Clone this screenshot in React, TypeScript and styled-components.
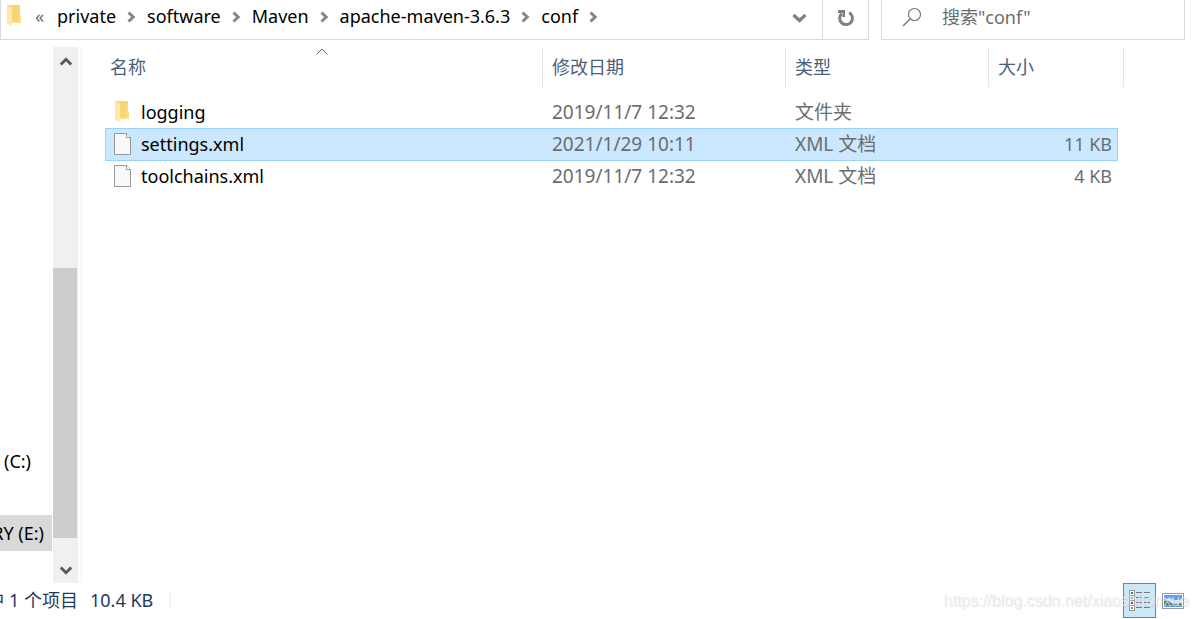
import React from 'react';
import styled, { createGlobalStyle } from 'styled-components';

const GlobalStyle = createGlobalStyle`
  *, *::before, *::after { box-sizing: border-box; }
  body {
    margin: 0;
    background: #fff;
    color: #000;
    font-family: "Noto Sans", "Noto Sans CJK SC", sans-serif;
    font-size: 18px;
    line-height: 24px;
  }
  button {
    font: inherit;
    color: inherit;
    background: none;
    border: 0;
    padding: 0;
    display: flex;
    align-items: center;
    justify-content: center;
  }
`;

const Window = styled.div`
  position: relative;
  display: flex;
  flex-direction: column;
  min-height: 100vh;
  overflow: hidden;
`;

const Toolbar = styled.header`
  display: flex;
  gap: 12px;
  height: 40px;
  padding-right: 13px;
`;

const AddressBar = styled.nav`
  display: flex;
  flex: 1;
  min-width: 0;
  border: 1px solid #d9d9d9;
  border-top: 0;
`;

const Crumbs = styled.ol`
  display: flex;
  flex: 1;
  align-items: center;
  min-width: 0;
  margin: 0;
  padding: 0 0 7px 6px;
  list-style: none;
  white-space: nowrap;
`;

const Crumb = styled.li`
  display: flex;
  align-items: center;
`;

const Overflow = styled.button`
  width: 35px;
  color: #6d6d6d;
`;

const CrumbArrow = styled.svg`
  width: 9px;
  height: 12px;
  margin: 2px 11px 0;
`;

const BarButton = styled.button<{ $divided?: boolean }>`
  width: 46px;
  padding-bottom: 4px;
  border-left: ${(p) => (p.$divided ? '1px solid #d9d9d9' : '0')};
`;

const SearchBox = styled.label`
  display: flex;
  align-items: center;
  gap: 20px;
  width: 304px;
  padding: 0 20px 6px;
  border: 1px solid #d9d9d9;
  border-top: 0;
`;

const SearchInput = styled.input`
  flex: 1;
  min-width: 0;
  padding: 0;
  border: 0;
  outline: 0;
  background: none;
  font: inherit;
  &::placeholder { color: #6d6d6d; opacity: 1; }
`;

const Body = styled.div`
  display: flex;
  flex: 1;
  padding-top: 7px;
`;

const Sidebar = styled.aside`
  display: flex;
  flex-direction: column;
  justify-content: flex-end;
  width: 53px;
  padding: 0 1px 32px 0;
`;

const Drive = styled.button<{ $selected?: boolean }>`
  justify-content: flex-end;
  height: 36px;
  margin-top: 36px;
  padding-right: ${(p) => (p.$selected ? '8px' : '21px')};
  overflow: hidden;
  white-space: nowrap;
  background: ${(p) => (p.$selected ? '#d9d9d9' : 'transparent')};
`;

const Scrollbar = styled.div`
  display: flex;
  flex-direction: column;
  width: 25px;
  background: #f0f0f0;
`;

const ScrollButton = styled.button`
  height: 28px;
`;

const ScrollGap = styled.div<{ $grow: number }>`
  flex: ${(p) => p.$grow};
`;

const Thumb = styled.div`
  flex: 270;
  margin-right: 1px;
  background: #cdcdcd;
`;

const Splitter = styled.div`
  width: 2px;
  margin-left: 2px;
  background: #f7f7f7;
`;

const Pane = styled.main`
  flex: 1;
  min-width: 0;
  padding: 0 74px 0 23px;
`;

const FileTable = styled.table`
  display: block;
`;

const Head = styled.thead`
  display: block;
  margin-bottom: 9px;
`;

const Rows = styled.tbody`
  display: block;
  padding-right: 6px;
`;

const HeadRow = styled.tr`
  display: grid;
  grid-template-columns: minmax(0, 1fr) 243px 203px 135px;
`;

const HeadCell = styled.th`
  position: relative;
  height: 40px;
  padding: 8px 9px 8px 5px;
  border-right: 1px solid #e5e5e5;
  color: #4c607a;
  font-weight: 400;
  text-align: left;
  & + & { padding-left: 9px; }
`;

const SortMark = styled.svg`
  position: absolute;
  top: 1px;
  left: calc(50% - 8px);
  width: 12px;
  height: 7px;
`;

const FileRow = styled.tr<{ $selected?: boolean }>`
  display: grid;
  grid-template-columns: minmax(0, 1fr) 243px 203px 129px;
  height: 33px;
  margin-bottom: -1px;
  border: 1px solid ${(p) => (p.$selected ? '#99d1ff' : 'transparent')};
  background: ${(p) => (p.$selected ? '#cce8ff' : 'transparent')};
`;

const Cell = styled.td`
  padding: 3px 5px 3px 10px;
  color: #6d6d6d;
  font-size: 19px;
  white-space: nowrap;
`;

const SizeCell = styled(Cell)`
  font-size: 18px;
  text-align: right;
`;

const NameCell = styled(Cell)`
  display: flex;
  align-items: center;
  padding: 3px 8px 4px;
  color: #000;
  font-size: 18px;
`;

const IconSlot = styled.span`
  display: flex;
  justify-content: center;
  width: 17px;
  margin-right: 10px;
`;

const StatusBar = styled.footer`
  display: flex;
  align-items: center;
  height: 36px;
  padding: 0 14px 1px 0;
  color: #1e395b;
`;

const Selection = styled.span`
  display: flex;
  justify-content: flex-end;
  width: 78px;
  margin-bottom: 2px;
  overflow: hidden;
  white-space: nowrap;
`;

const Size = styled.span`
  margin: 0 0 2px 12px;
  padding-right: 16px;
  border-right: 2px solid #f3f3f3;
  line-height: 18px;
`;

const Views = styled.div`
  display: flex;
  gap: 6px;
  margin-left: auto;
`;

const ViewButton = styled.button<{ $active?: boolean }>`
  width: ${(p) => (p.$active ? '33px' : '22px')};
  height: 35px;
  border: ${(p) => (p.$active ? '1px solid #2a9bd8' : '0')};
  background: ${(p) => (p.$active ? '#cce8f6' : 'transparent')};
`;

const Watermark = styled.div`
  position: absolute;
  right: 9px;
  bottom: 6px;
  color: rgba(238, 238, 238, 0.7);
  font-family: "Liberation Sans", sans-serif;
  font-size: 16px;
  text-shadow: 1px 1px 1px rgba(0, 0, 0, 0.1);
  pointer-events: none;
`;

const FolderIcon = () => (
  <svg width="15" height="22" viewBox="0 0 15 22" aria-hidden="true">
    <path d="M0 0H13V10L14 11V18H0Z" fill="#fadc80" />
    <path d="M5 0H12V17H5Z" fill="#f8d676" />
    <path d="M12 11H14V18H5V16H12Z" fill="#fbdf88" />
    <path d="M0 1L5 3V19L4 21L0 18Z" fill="#ffe9a6" />
  </svg>
);

const FileIcon = () => (
  <svg width="17" height="22" viewBox="0 0 17 22" aria-hidden="true">
    <path d="M.5 .5H12.5L16.5 4.5V21.5H.5Z" fill="#f8f9fa" stroke="#979797" />
    <path d="M12.5 .5V4.5H16.5" fill="#fff" stroke="#979797" />
  </svg>
);

const ScrollArrow = ({ down }: { down?: boolean }) => (
  <svg width="12" height="12" viewBox="0 0 12 12" aria-hidden="true">
    <path d={down ? 'M.8 4.5L6 9.7L11.2 4.5' : 'M.8 9.5L6 4.3L11.2 9.5'} fill="none" stroke="#5a5a5a" strokeWidth="3" />
  </svg>
);

const crumbs = ['private', 'software', 'Maven', 'apache-maven-3.6.3', 'conf'];

const files = [
  { name: 'logging', date: '2019/11/7 12:32', type: '文件夹', size: '', folder: true },
  { name: 'settings.xml', date: '2021/1/29 10:11', type: 'XML 文档', size: '11 KB', selected: true },
  { name: 'toolchains.xml', date: '2019/11/7 12:32', type: 'XML 文档', size: '4 KB' },
];

const detailRows = ['#2a7a9a', '#7a8a9a', '#c03030', '#6ab04a'];

export default function App() {
  return (
    <Window>
      <GlobalStyle />
      <Toolbar>
        <AddressBar>
          <Crumbs>
            <Crumb>
              <FolderIcon />
              <Overflow>«</Overflow>
            </Crumb>
            {crumbs.map((name) => (
              <Crumb key={name}>
                <button>{name}</button>
                <CrumbArrow viewBox="0 0 9 12" aria-hidden="true">
                  <path d="M1.5 1.5L6.2 6L1.5 10.5" fill="none" stroke="#858585" strokeWidth="3" />
                </CrumbArrow>
              </Crumb>
            ))}
          </Crumbs>
          <BarButton aria-label="history">
            <svg width="14" height="10" viewBox="0 0 14 10" aria-hidden="true">
              <path d="M1.5 2L7.5 7.5L13.5 2" fill="none" stroke="#808080" strokeWidth="3.2" />
            </svg>
          </BarButton>
          <BarButton $divided aria-label="refresh">
            <svg width="18" height="18" viewBox="0 0 18 18" aria-hidden="true">
              <path d="M12.2 3.6A6.4 6.4 0 1 1 4.6 4.6" fill="none" stroke="#808080" strokeWidth="3" />
              <path d="M1 1H8V8H5.5V4H1Z" fill="#808080" />
            </svg>
          </BarButton>
        </AddressBar>
        <SearchBox>
          <svg width="20" height="20" viewBox="0 0 20 20" aria-hidden="true">
            <circle cx="12.5" cy="7.5" r="6" fill="none" stroke="#777" strokeWidth="1.2" />
            <path d="M8.3 11.7L1 19" stroke="#777" strokeWidth="1.4" />
          </svg>
          <SearchInput type="text" placeholder={'搜索"conf"'} aria-label="search" />
        </SearchBox>
      </Toolbar>

      <Body>
        <Sidebar>
          <Drive>(C:)</Drive>
          <Drive $selected>RY (E:)</Drive>
        </Sidebar>
        <Scrollbar>
          <ScrollButton aria-label="up"><ScrollArrow /></ScrollButton>
          <ScrollGap $grow={193} />
          <Thumb />
          <ScrollGap $grow={17} />
          <ScrollButton aria-label="down"><ScrollArrow down /></ScrollButton>
        </Scrollbar>
        <Splitter />
        <Pane>
          <FileTable>
            <Head>
              <HeadRow>
                <HeadCell>
                  名称
                  <SortMark viewBox="0 0 12 7" aria-hidden="true">
                    <path d="M.5 6.5L6 1L11.5 6.5" fill="none" stroke="#666" />
                  </SortMark>
                </HeadCell>
                <HeadCell>修改日期</HeadCell>
                <HeadCell>类型</HeadCell>
                <HeadCell>大小</HeadCell>
              </HeadRow>
            </Head>
            <Rows>
              {files.map((f) => (
                <FileRow key={f.name} $selected={f.selected}>
                  <NameCell>
                    <IconSlot>{f.folder ? <FolderIcon /> : <FileIcon />}</IconSlot>
                    {f.name}
                  </NameCell>
                  <Cell>{f.date}</Cell>
                  <Cell>{f.type}</Cell>
                  <SizeCell>{f.size}</SizeCell>
                </FileRow>
              ))}
            </Rows>
          </FileTable>
        </Pane>
      </Body>

      <StatusBar>
        <Selection>中 1 个项目</Selection>
        <Size>10.4 KB</Size>
        <Views>
          <ViewButton $active aria-label="details">
            <svg width="21" height="21" viewBox="0 0 21 21" aria-hidden="true">
              <rect x=".5" y=".5" width="5" height="20" fill="#fff" stroke="#999" />
              {detailRows.map((c, i) => (
                <g key={c}>
                  <path d={`M0 ${i * 5 + 0.5}H6`} stroke="#999" />
                  <rect x="2" y={i * 5 + 2} width="2" height="2" fill={c} />
                  <path d={`M7 ${i * 5 + 2.5}H13M15 ${i * 5 + 2.5}H21`} stroke="#777" />
                </g>
              ))}
            </svg>
          </ViewButton>
          <ViewButton aria-label="large icons">
            <svg width="22" height="16" viewBox="0 0 22 16" aria-hidden="true">
              <rect x=".5" y=".5" width="21" height="15" fill="#fff" stroke="#999" />
              <rect x="2" y="2" width="18" height="12" fill="#5f9ff0" />
              <path d="M2 7Q6 4 10 6T20 6V11H2Z" fill="#d5e7fb" />
              <path d="M2 8L5 7L9 10L13 11L20 10V12H2Z" fill="#4a8070" />
              <path d="M2 12H20V14H2Z" fill="#6aa5e0" />
            </svg>
          </ViewButton>
        </Views>
      </StatusBar>
      <Watermark>https://blog.csdn.net/xiaoshitonxue</Watermark>
    </Window>
  );
}
